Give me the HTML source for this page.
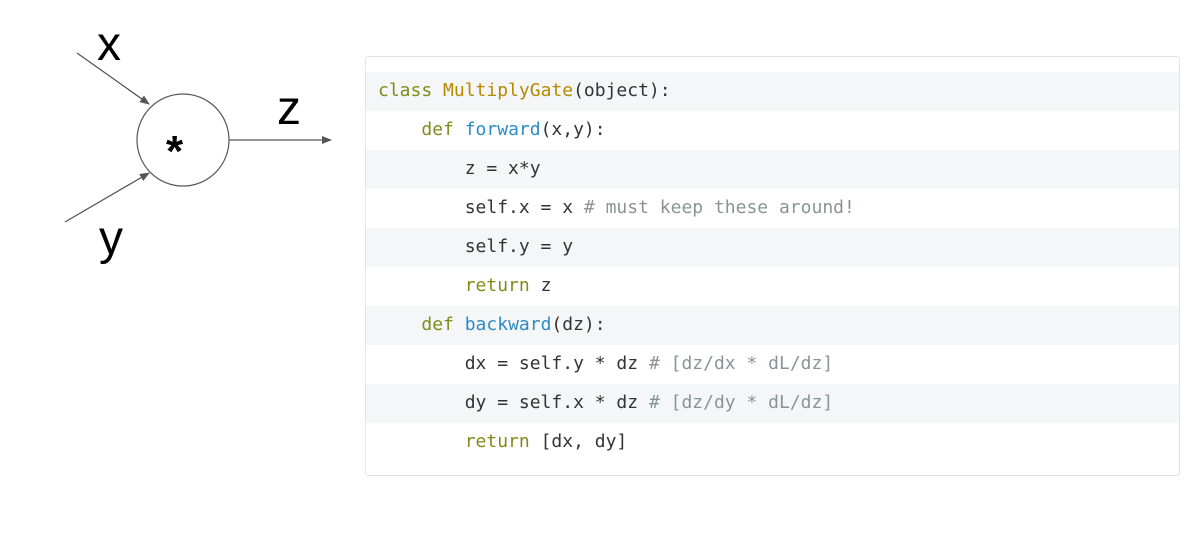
<!DOCTYPE html>
<html><head><style>
body{margin:0;background:#fff;width:1191px;height:533px;overflow:hidden;position:relative;font-family:"Liberation Sans",sans-serif}
.box{position:absolute;left:365px;top:56px;width:813px;height:418px;border:1px solid #e1e4e8;border-radius:3px;background:#fff}
.row{position:absolute;left:0;right:0;height:39px;line-height:38px;font-family:"DejaVu Sans Mono",monospace;font-size:18px;color:#333;padding-left:12px;white-space:pre}
.g{background:#f5f6f7}
.k{color:#7e8c1a}.c{color:#b58900}.f{color:#2f8bc4}.m{color:#8a9494}
</style></head><body>
<svg width="360" height="300" style="position:absolute;left:0;top:0">
<defs><marker id="a" markerWidth="10" markerHeight="8" refX="9" refY="4" orient="auto" markerUnits="userSpaceOnUse"><path d="M0,0 L10,4 L0,8 Z" fill="#555"/></marker></defs>
<circle cx="183" cy="140" r="46" fill="none" stroke="#555" stroke-width="1.2"/>
<line x1="77" y1="53" x2="149" y2="104" stroke="#555" stroke-width="1.3" marker-end="url(#a)"/>
<line x1="65" y1="222" x2="149" y2="173" stroke="#555" stroke-width="1.3" marker-end="url(#a)"/>
<line x1="229" y1="140" x2="331" y2="140" stroke="#555" stroke-width="1.3" marker-end="url(#a)"/>
<text x="97" y="60" font-family="Liberation Sans" font-size="48" fill="#000">x</text>
<text x="99" y="254" font-family="Liberation Sans" font-size="48" fill="#000">y</text>
<text x="277" y="124" font-family="Liberation Sans" font-size="48" fill="#000">z</text>
<text x="166" y="166" font-family="Liberation Sans" font-size="44" font-weight="bold" fill="#000">*</text>
</svg>
<div class="box">
<div class="row g" style="top:15px"><span class="k">class</span> <span class="c">MultiplyGate</span>(object):</div>
<div class="row" style="top:54px">    <span class="k">def</span> <span class="f">forward</span>(x,y):</div>
<div class="row g" style="top:93px">        z = x*y</div>
<div class="row" style="top:132px">        self.x = x <span class="m"># must keep these around!</span></div>
<div class="row g" style="top:171px">        self.y = y</div>
<div class="row" style="top:210px">        <span class="k">return</span> z</div>
<div class="row g" style="top:249px">    <span class="k">def</span> <span class="f">backward</span>(dz):</div>
<div class="row" style="top:288px">        dx = self.y * dz <span class="m"># [dz/dx * dL/dz]</span></div>
<div class="row g" style="top:327px">        dy = self.x * dz <span class="m"># [dz/dy * dL/dz]</span></div>
<div class="row" style="top:366px">        <span class="k">return</span> [dx, dy]</div>
</div>
</body></html>
